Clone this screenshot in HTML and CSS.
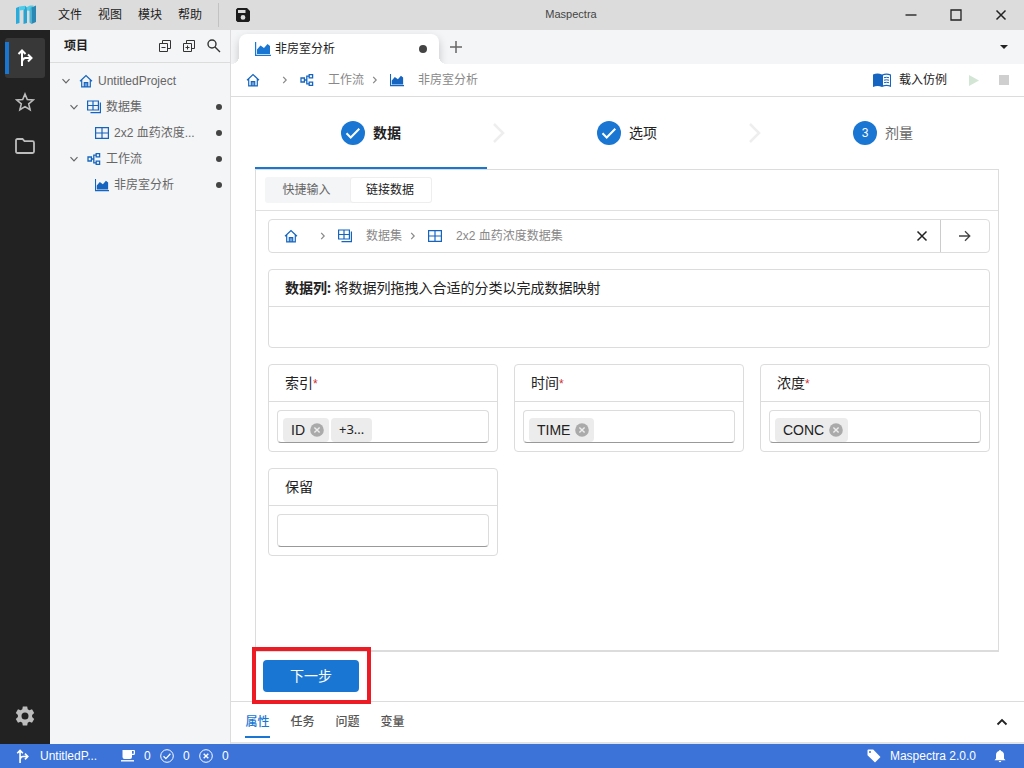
FILE: index.html
```
<!DOCTYPE html>
<html lang="zh-CN">
<head>
<meta charset="utf-8">
<meta name="viewport" content="width=device-width, initial-scale=1">
<title>Maspectra</title>
<link rel="stylesheet" href="styles.css">
</head>
<body>
<svg class="sprite" aria-hidden="true">
  <symbol id="home" viewBox="0 0 14 14"><path d="M1 7.2 7 1.5l6 5.7M2.7 6v6.8h8.6V6M5.3 12.8V8.6h3.4v4.2M7 8.6v4.2" fill="none" stroke="currentColor" stroke-width="1.2"/></symbol>
  <symbol id="grid" viewBox="0 0 14 14"><path d="M.6 1.6h12.8v10.8H.6zM7 1.6v10.8M.6 7h12.8" fill="none" stroke="currentColor" stroke-width="1.2"/></symbol>
  <symbol id="grids" viewBox="0 0 14 14"><path d="M.6 1h10.8v9H.6zM6 1v9M.6 5.5h10.8M13.4 2.5v10.2H3.5" fill="none" stroke="currentColor" stroke-width="1.2"/></symbol>
  <symbol id="flow" viewBox="0 0 14 14"><path d="M1 5h3.400v4H1zM9.200 1.600h3.400v3.200H9.200zM9.200 9.200h3.400v3.200H9.200zM4.400 7h2.400M9 3.200H6.800v7.600H9" fill="none" stroke="currentColor" stroke-width="1.3"/></symbol>
  <symbol id="chart" viewBox="0 0 16 14"><path d="M.6 0v13.4H16" fill="none" stroke="currentColor" stroke-width="1.2"/><path d="M2 12V7.500L5.500 3.500 9 6l3.500-4L15 4V12z" fill="currentColor"/></symbol>
  <symbol id="down" viewBox="0 0 10 10"><path d="m1.500 3.200 3.500 3.600 3.500-3.600" fill="none" stroke="currentColor" stroke-width="1.2"/></symbol>
  <symbol id="right" viewBox="0 0 10 10"><path d="m3.200 1.800 3 3.200-3 3.200" fill="none" stroke="currentColor" stroke-width="1.2"/></symbol>
  <symbol id="cross" viewBox="0 0 12 12"><path d="m1.500 1.500 9 9m0-9-9 9" fill="none" stroke="currentColor" stroke-width="1.5"/></symbol>
  <symbol id="branch" viewBox="0 0 16 18"><path d="M5 17V2M1.500 5 5 1.500 8.500 5M5 12.500Q6 9 8.500 9H14M11 5.500 14.500 9 11 12.500" fill="none" stroke="currentColor" stroke-width="2"/></symbol>
  <symbol id="check" viewBox="0 0 24 24"><circle cx="12" cy="12" r="12" fill="currentColor"/><path d="m5.500 12.300 4.200 4.200 8.600-8.800" fill="none" stroke="#fff" stroke-width="2"/></symbol>
  <symbol id="chev" viewBox="0 0 12 20"><path d="m1 1 9 9-9 9" fill="none" stroke="currentColor" stroke-width="2.5"/></symbol>
  <symbol id="remove" viewBox="0 0 14 14"><circle cx="7" cy="7" r="6.800" fill="currentColor"/><path d="m4.400 4.400 5.200 5.200m0-5.200L4.400 9.600" stroke="#ececec" stroke-width="1.4"/></symbol>
</svg>
<div class="app">
  <header class="titlebar">
    <div class="titlebar-left">
      <svg class="logo" viewBox="0 0 20 20"><path d="M0 3l3.500-1.500V18L0 19z" fill="#29abdc"/><path d="M3.500 1.500 9 .8v4L3.500 5.500z" fill="#4ecbe6"/><path d="M9 .8 11 2.500V18l-3.500 1V5L9 4z" fill="#2ba3d0"/><path d="M10.500 2.300 14 .5h3.500L15 6l-4-.5z" fill="#52cbe4"/><path d="M15.500 1.500V19l-2-1.500V4z" fill="#3fb9dc"/><path d="M15.500 2.500 20 .5V17l-4.500 2z" fill="#2b87b3"/></svg>
      <nav class="menu">
        <button>文件</button><button>视图</button><button>模块</button><button>帮助</button>
      </nav>
      <button class="save" aria-label="保存"><svg width="14" height="14" viewBox="0 0 14 14"><path fill-rule="evenodd" d="M1.500 0H11l3 3v9.500L12.500 14h-11L0 12.500v-11zM2 2v3h7.500V2zM7 7a2.400 2.400 0 1 0 0 4.800A2.400 2.400 0 0 0 7 7z" fill="#1c1c1c"/></svg></button>
    </div>
    <h1 class="title">Maspectra</h1>
    <div class="window-buttons">
      <button aria-label="最小化"><svg width="12" height="12"><path d="M.5 6h11" stroke="#333" stroke-width="1.500"/></svg></button>
      <button aria-label="最大化"><svg width="12" height="12"><path d="M1 1h10v10H1z" fill="none" stroke="#222" stroke-width="1.300"/></svg></button>
      <button aria-label="关闭"><svg width="12" height="12"><use href="#cross"/></svg></button>
    </div>
  </header>

  <div class="body">
    <nav class="rail">
      <button class="rail-item active" aria-label="项目"><svg width="16" height="18"><use href="#branch"/></svg></button>
      <button class="rail-item" aria-label="收藏"><svg width="20" height="20" viewBox="0 0 20 20"><path d="m10 2 2.300 5.500 6 .5-4.600 3.900 1.400 5.900-5.100-3.200-5.100 3.200 1.400-5.900L1.700 8l6-.5z" fill="none" stroke="currentColor" stroke-width="1.600"/></svg></button>
      <button class="rail-item" aria-label="文件夹"><svg width="20" height="16" viewBox="0 0 20 16"><path d="M1 13.500v-11Q1 1 2.500 1h5l2 2.200h8Q19 3.200 19 4.700v8.800q0 1.500-1.500 1.500h-15Q1 15 1 13.500z" fill="none" stroke="currentColor" stroke-width="1.800"/></svg></button>
      <button class="rail-item settings" aria-label="设置"><svg width="20" height="20" viewBox="0 0 20 20"><path fill-rule="evenodd" d="M7.800.5h4.400l.5 2.700 1.700 1L17 3.300l2.200 3.800-2.100 1.800v2.200l2.100 1.800-2.200 3.800-2.600-.9-1.700 1-.5 2.700H7.800l-.5-2.700-1.700-1-2.600.9-2.200-3.800 2.100-1.800V8.900L.8 7.100 3 3.300l2.600.9 1.700-1zM10 6.500a3.500 3.500 0 1 0 0 7 3.500 3.500 0 0 0 0-7z" fill="currentColor"/></svg></button>
    </nav>

    <aside class="sidebar">
      <div class="sidebar-head">
        <h2>项目</h2>
        <button aria-label="全部折叠"><svg width="12" height="12" viewBox="0 0 12 12"><path d="M.5 3.500h8v8h-8zM3.500 3.500v-3h8v8h-3M2.500 7.500h4" fill="none" stroke="currentColor"/></svg></button>
        <button aria-label="全部展开"><svg width="12" height="12" viewBox="0 0 12 12"><path d="M.5 3.500h8v8h-8zM3.500 3.500v-3h8v8h-3M2.500 7.500h4M4.500 5.500v4" fill="none" stroke="currentColor"/></svg></button>
        <button aria-label="搜索"><svg width="14" height="14" viewBox="0 0 14 14"><path d="M9 5a4 4 0 1 1-8 0 4 4 0 0 1 8 0zM8 8l5 5" fill="none" stroke="currentColor" stroke-width="1.400"/></svg></button>
      </div>
      <ul class="tree">
        <li><svg class="arrow"><use href="#down"/></svg><svg class="ico"><use href="#home"/></svg><span>UntitledProject</span></li>
        <li class="lv1"><svg class="arrow"><use href="#down"/></svg><svg class="ico"><use href="#grids"/></svg><span>数据集</span><i class="dot"></i></li>
        <li class="lv2"><svg class="ico"><use href="#grid"/></svg><span>2x2 血药浓度...</span><i class="dot"></i></li>
        <li class="lv1"><svg class="arrow"><use href="#down"/></svg><svg class="ico"><use href="#flow"/></svg><span>工作流</span><i class="dot"></i></li>
        <li class="lv2"><svg class="ico"><use href="#chart"/></svg><span>非房室分析</span><i class="dot"></i></li>
      </ul>
    </aside>

    <main class="main">
      <div class="tabs">
        <button class="tab"><svg width="16" height="14"><use href="#chart"/></svg><span>非房室分析</span><i class="dot"></i></button>
        <button class="tab-add" aria-label="新建标签"><svg width="12" height="12"><path d="M6 0v12M0 6h12" stroke="#666" stroke-width="1.500"/></svg></button>
        <button class="tab-more" aria-label="更多标签"><svg width="8" height="4"><path d="M0 0h8L4 4z" fill="#222"/></svg></button>
      </div>

      <div class="crumbbar">
        <nav class="crumbs">
          <a href="#" class="first" aria-label="主页"><svg class="ico"><use href="#home"/></svg></a>
          <svg class="sep"><use href="#right"/></svg>
          <a href="#"><svg class="ico"><use href="#flow"/></svg>工作流</a>
          <svg class="sep"><use href="#right"/></svg>
          <a href="#"><svg class="ico"><use href="#chart"/></svg>非房室分析</a>
        </nav>
        <button class="example"><svg width="18" height="14" viewBox="0 0 18 14"><path d="M0 1.500Q4.500-.5 9 1.500 13.500-.5 18 1.500V14q-4.500-2-9 0-4.500-2-9 0z" fill="#1565c0"/><path d="M10 2.500q3.500-1.300 7 0v9.800q-3.500-1.200-7 0z" fill="#fff"/><path d="M11 4.700q2.500-.8 5 0M11 7.200q2.500-.8 5 0M11 9.700q2.500-.8 5 0" stroke="#1565c0" fill="none"/></svg>载入仿例</button>
        <button class="run" aria-label="运行"><svg width="10" height="11"><path d="M0 0l10 5.500L0 11z" fill="#d3e5d5"/></svg></button>
        <button class="stop" aria-label="停止"><svg width="10" height="10"><path d="M0 0h10v10H0z" fill="#cfcfcf"/></svg></button>
      </div>

      <section class="content">
        <ol class="steps">
          <li class="step current"><svg width="24" height="24"><use href="#check"/></svg>数据</li>
          <li class="step-sep"><svg width="12" height="20"><use href="#chev"/></svg></li>
          <li class="step done"><svg width="24" height="24"><use href="#check"/></svg>选项</li>
          <li class="step-sep"><svg width="12" height="20"><use href="#chev"/></svg></li>
          <li class="step"><span class="num">3</span>剂量</li>
        </ol>

        <div class="panel">
          <div class="panel-head">
            <div class="segment"><button>快捷输入</button><button class="on">链接数据</button></div>
          </div>
          <div class="panel-body">
            <div class="path">
              <nav class="crumbs">
                <a href="#" class="first" aria-label="主页"><svg class="ico"><use href="#home"/></svg></a>
                <svg class="sep"><use href="#right"/></svg>
                <a href="#"><svg class="ico"><use href="#grids"/></svg>数据集</a>
                <svg class="sep"><use href="#right"/></svg>
                <a href="#"><svg class="ico"><use href="#grid"/></svg>2x2 血药浓度数据集</a>
              </nav>
              <button class="clear" aria-label="清除"><svg width="12" height="12"><use href="#cross"/></svg></button>
              <button class="go" aria-label="转到"><svg width="12" height="12"><path d="M0 6h10.500M6 1.200 10.800 6 6 10.800" fill="none" stroke="#444" stroke-width="1.300"/></svg></button>
            </div>
            <div class="card columns">
              <div class="card-head"><strong>数据列:</strong> 将数据列拖拽入合适的分类以完成数据映射</div>
              <div class="drop"></div>
            </div>
            <div class="fields">
              <div class="card"><label class="card-head" for="f1">索引<em>*</em></label>
                <div class="field"><span class="chip">ID<button aria-label="移除 ID"><svg width="14" height="14"><use href="#remove"/></svg></button></span><span class="chip more">+3...</span><input id="f1"></div></div>
              <div class="card"><label class="card-head" for="f2">时间<em>*</em></label>
                <div class="field"><span class="chip">TIME<button aria-label="移除 TIME"><svg width="14" height="14"><use href="#remove"/></svg></button></span><input id="f2"></div></div>
              <div class="card"><label class="card-head" for="f3">浓度<em>*</em></label>
                <div class="field"><span class="chip">CONC<button aria-label="移除 CONC"><svg width="14" height="14"><use href="#remove"/></svg></button></span><input id="f3"></div></div>
              <div class="card"><label class="card-head" for="f4">保留</label>
                <div class="field"><input id="f4"></div></div>
            </div>
          </div>
        </div>
        <div class="actions"><button class="next">下一步</button></div>
      </section>

      <div class="dock">
        <button class="on">属性</button><button>任务</button><button>问题</button><button>变量</button>
        <button class="expand" aria-label="展开"><svg width="12" height="8"><path d="m1.500 6.500 4.500-4.500 4.500 4.500" fill="none" stroke="#222" stroke-width="1.800"/></svg></button>
      </div>
    </main>
  </div>

  <footer class="status">
    <svg class="status-branch" width="13" height="15"><use href="#branch"/></svg>
    <span class="project">UntitledP...</span>
    <svg width="14" height="14" viewBox="0 0 14 14"><path d="M1.500 1H13q1 0 1 1v2.500q0 1.500-1.500 1.500H11v2Q11 10 9 10H3.500q-2 0-2-2zM11 2v2.800h1.700V2z" fill="#fff" fill-rule="evenodd"/><path d="M0 11.800h13" stroke="#fff" stroke-width="1.400"/></svg>
    <span class="count">0</span>
    <svg width="14" height="14" viewBox="0 0 14 14"><circle cx="7" cy="7" r="6.300" fill="none" stroke="#fff"/><path d="m3.500 7.200 2.400 2.400 4.500-4.800" fill="none" stroke="#fff" stroke-width="1.300"/></svg>
    <span class="count">0</span>
    <svg width="14" height="14" viewBox="0 0 14 14"><circle cx="7" cy="7" r="6.300" fill="none" stroke="#fff"/><path d="m4.700 4.700 4.600 4.600m0-4.600L4.700 9.300" stroke="#fff" stroke-width="1.400"/></svg>
    <span class="count">0</span>
    <span class="version"><svg width="14" height="14" viewBox="0 0 14 14"><path fill-rule="evenodd" d="M.5 1.500q0-1 1-1h4.700L13.500 8 8 13.500.5 6.200zM3 2a1 1 0 1 0 0 2 1 1 0 0 0 0-2z" fill="#fff"/></svg>Maspectra 2.0.0</span>
    <svg width="12" height="14" viewBox="0 0 12 14"><path d="M6 1q1 0 1 1 3 .8 3 4v3.500l1.500 1.700H.5L2 9.500V6q0-3.200 3-4 0-1 1-1zM4.700 12h2.600Q7 13.300 6 13.300T4.700 12z" fill="#fff"/></svg>
  </footer>
</div>
<div class="highlight"></div>
</body>
</html>
```

FILE: styles.css
```
* { box-sizing: border-box; margin: 0; padding: 0; }
body {
  font: 12px/16px "Liberation Sans", "Noto Sans CJK SC", sans-serif;
  color: #222;
  background: #fff;
}
button, input { font: inherit; color: inherit; background: none; border: 0; outline: 0; }
button { display: inline-flex; align-items: center; justify-content: center; }
a { color: inherit; text-decoration: none; }
ul, ol { list-style: none; }
svg { display: block; flex: none; }
.sprite { position: absolute; width: 0; height: 0; }
.app { display: flex; flex-direction: column; height: 100vh; }
.ico { width: 14px; height: 14px; color: #1565c0; }
.dot { width: 6px; height: 6px; border-radius: 50%; background: #444; }

.titlebar { display: flex; height: 30px; background: #dcdcdc; flex: none; }
.titlebar-left { display: flex; align-items: center; padding-left: 16px; }
.logo { width: 20px; height: 20px; }
.menu { display: flex; align-items: center; margin-left: 14px; border-right: 1px solid #c2c2c2; height: 24px; padding-right: 8px; }
.menu button { width: 40px; }
.save { width: 33px; height: 30px; margin-left: 7px; }
.title { flex: 1; font-size: 11px; font-weight: 400; line-height: 28px; text-align: center; color: #444; padding-right: 5px; }
.window-buttons { display: flex; width: 136px; }
.window-buttons button { width: 45px; height: 30px; }

.body { display: flex; flex: 1; min-height: 0; }
.rail { width: 50px; flex: none; background: #222; display: flex; flex-direction: column; align-items: center; gap: 4px; padding: 8px 0; }
.rail-item { width: 40px; height: 40px; color: #bdbdbd; border-radius: 3px; }
.rail-item.active { color: #fff; background: linear-gradient(#1976d2, #1976d2) 0 4px / 4px 32px no-repeat #383838; }
.settings { margin-top: auto; }

.sidebar { width: 181px; flex: none; background: #f4f5f7; border-right: 1px solid #dcdcdc; }
.sidebar-head { height: 33px; display: flex; align-items: center; padding: 0 9px 0 14px; border-bottom: 1px solid #dcdcdc; gap: 12px; color: #333; }
.sidebar-head h2 { font-size: 12px; font-weight: 700; color: #222; flex: 1; }
.tree { padding: 5px 8px 0 11px; color: #666; }
.tree li { height: 26px; display: flex; align-items: center; }
.tree .lv1 { padding-left: 8px; }
.tree .lv2 { padding-left: 34px; }
.tree .arrow { width: 10px; height: 10px; margin-right: 8px; }
.tree span { margin-left: 5px; }
.tree .dot { margin-left: auto; }

.main { flex: 1; min-width: 0; display: flex; flex-direction: column; }
.tabs { height: 34px; flex: none; background: #f4f5f7; display: flex; align-items: flex-end; padding-left: 8px; overflow: hidden; }
.tab { position: relative; width: 200px; height: 30px; background: #fff; border-radius: 8px 8px 0 0; box-shadow: 0 4px 10px rgba(0, 0, 0, .2); justify-content: flex-start; padding: 0 12px 0 16px; gap: 4px; }
.tab::before, .tab::after { content: ""; position: absolute; bottom: 0; width: 8px; height: 8px; }
.tab::before { left: -8px; background: radial-gradient(circle at 0 0, transparent 8px, #fff 8px); }
.tab::after { right: -8px; background: radial-gradient(circle at 100% 0, transparent 8px, #fff 8px); }
.tab svg { color: #1976d2; }
.tab .dot { width: 8px; height: 8px; margin-left: auto; }
.tab-add { width: 34px; height: 34px; }
.tab-more { width: 40px; height: 34px; margin-left: auto; }

.crumbbar { height: 33px; flex: none; display: flex; align-items: center; border-bottom: 1px solid #dcdcdc; padding: 0 15px; }
.crumbs { display: flex; align-items: center; flex: 1; color: #888; }
.crumbs a { display: flex; align-items: center; gap: 14px; }
.crumbs .first { margin-right: 20px; }
.crumbs .sep { width: 10px; height: 10px; margin-right: 10px; }
.crumbs a + .sep { margin-left: 6px; }
.crumbs .first + .sep { margin-left: 0; }
.example { gap: 8px; }
.run { margin-left: 22px; }
.stop { margin-left: 20px; width: 10px; }

.content { flex: 1; min-height: 0; padding: 0 25px 0 24px; display: flex; flex-direction: column; }
.steps { display: flex; height: 72px; flex: none; }
.step { flex: 1; display: flex; align-items: center; justify-content: center; gap: 8px; color: #666; font-size: 14px; border-bottom: 2px solid transparent; padding-top: 2px; }
.step svg { color: #1976d2; }
.step.current { font-weight: 700; color: #222; border-bottom-color: #1976d2; }
.step.done { color: #222; }
.step-sep { width: 24px; display: flex; align-items: center; justify-content: center; color: #eee; }
.num { width: 24px; height: 24px; border-radius: 50%; background: #1976d2; color: #fff; font-size: 12px; line-height: 24px; text-align: center; }

.panel { flex: 1; min-height: 0; border: 1px solid #dcdcdc; border-bottom-width: 2px; }
.panel-head { height: 41px; padding: 7px 9px; border-bottom: 1px solid #e0e0e0; }
.segment { display: inline-flex; background: #f4f5f7; border-radius: 3px; }
.segment button { height: 26px; width: 85px; padding-right: 2px; color: #666; }
.segment .on { width: 82px; background: #fff; color: #222; border: 1px solid #eee; border-radius: 3px; }
.panel-body { display: flex; flex-direction: column; gap: 16px; padding: 8px 8px 8px 12px; }
.path { display: flex; height: 34px; border: 1px solid #dcdcdc; border-radius: 4px; padding-left: 15px; }
.clear { width: 36px; }
.go { width: 49px; border-left: 1px solid #ccc; }
.card { border: 1px solid #dcdcdc; border-radius: 4px; font-size: 14px; }
.card-head { display: block; height: 37px; line-height: 36px; padding: 0 16px; border-bottom: 1px solid #dcdcdc; }
.columns .card-head { font-family: "Noto Sans", "Noto Sans CJK SC", sans-serif; }
.card-head em { color: #d32f2f; font-style: normal; font-size: 12px; }
.drop { height: 40px; }
.fields { display: grid; grid-template-columns: repeat(3, minmax(0, 1fr)); gap: 16px; }
.field { display: flex; align-items: flex-end; height: 33px; margin: 8px; border: 1px solid #dcdcdc; border-bottom-color: #999; border-radius: 4px; padding: 0 5px; gap: 2px; overflow: hidden; }
.field input { flex: 1; width: 0; min-width: 0; height: 30px; }
.chip { display: flex; align-items: center; gap: 5px; height: 24px; padding: 0 5px 0 8px; border-radius: 4px; background: #ececec; }
.chip button { color: #aaa; }
.chip.more { padding: 0 8px 2px; font-family: "Noto Sans", sans-serif; font-size: 13px; }

.actions { height: 49px; flex: none; padding: 8px; }
.next { width: 96px; height: 32px; background: #1976d2; color: #fff; border-radius: 4px; font-size: 14px; }
.dock { height: 43px; flex: none; display: flex; align-items: flex-start; gap: 20px; padding: 0 16px 0 14px; border-top: 1px solid #dcdcdc; border-bottom: 2px solid #e2e3e5; color: #555; font-weight: 500; }
.dock button { height: 36px; width: 25px; padding-top: 6px; border-bottom: 2px solid transparent; }
.dock .on { color: #1976d2; border-bottom-color: #1976d2; }
.dock .expand { width: 12px; margin-left: auto; }

.status { height: 24px; flex: none; display: flex; align-items: center; background: #3b73d8; color: #fff; padding: 0 18px 0 16px; }
.status-branch { margin-right: 11px; }
.project { width: 81px; }
.count { width: 25px; padding-left: 9px; }
.version { display: flex; align-items: center; gap: 9px; margin: 0 18px 0 auto; }

.highlight { position: absolute; left: 252px; bottom: 64px; width: 119px; height: 57px; border: 4px solid #ed1c24; pointer-events: none; }
```
